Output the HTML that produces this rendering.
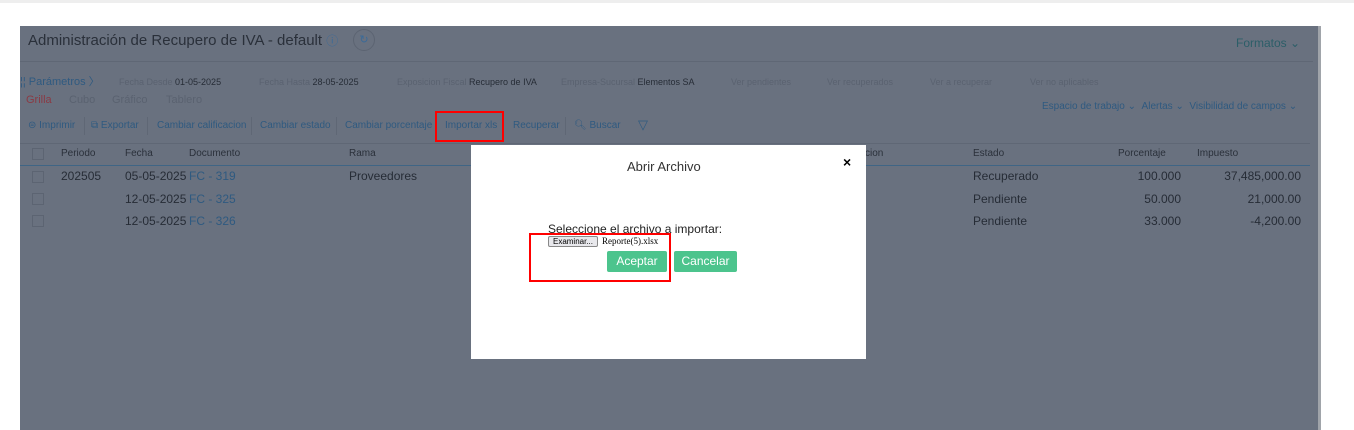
<!DOCTYPE html>
<html><head><meta charset="utf-8"><style>
*{margin:0;padding:0;box-sizing:border-box}
body{width:1354px;height:430px;background:#fff;position:relative;overflow:hidden;font-family:"Liberation Sans",sans-serif}
.bg{position:absolute;left:20px;top:26px;width:1300px;height:404px;background:#69717f}
.sb{position:absolute;left:1318px;top:26px;width:3px;height:404px;background:#a0a4aa}
.t{position:absolute;white-space:nowrap}
.s{font-size:9px;color:#5a6270}
.v{font-size:9px;color:#262c36}
.b{font-size:10px;color:#2f5a80}
.h{font-size:10px;color:#2a303a}
.r{font-size:12px;color:#262c36}
.ln{position:absolute;background:#5f6775}
.cb{position:absolute;width:12px;height:12px;border:1px solid #5c6472}
.red{position:absolute;border:2px solid #f00}
.sep{position:absolute;top:117px;width:1px;height:18px;background:#5f6775}
</style></head><body>
<div style="position:absolute;left:0;top:0;width:1354px;height:3px;background:#eee"></div>
<div class="bg"></div><div class="sb"></div>
<div class="t" style="left:28px;top:32px;font-size:15px;color:#2a303a">Administración de Recupero de IVA - default <span style="color:#3a6a98;font-size:12px">ⓘ</span></div>
<div style="position:absolute;left:353px;top:29px;width:22px;height:22px;border:1px solid #5c6472;border-radius:50%;color:#3a6a98;font-size:11px;text-align:center;line-height:20px">↻</div>
<div class="t" style="left:1236px;top:36px;font-size:12px;color:#2c5e68">Formatos ⌄</div>
<div class="ln" style="left:20px;top:61px;width:1293px;height:1px"></div>
<div class="t" style="left:20px;top:73px;font-size:11px;color:#2f5a80">¦¦ Parámetros 〉</div>
<div class="t s" style="left:119px;top:77px">Fecha Desde <span class="v">01-05-2025</span></div>
<div class="t s" style="left:259px;top:77px">Fecha Hasta <span class="v">28-05-2025</span></div>
<div class="t s" style="left:397px;top:77px">Exposicion Fiscal <span class="v">Recupero de IVA</span></div>
<div class="t s" style="left:561px;top:77px">Empresa-Sucursal <span class="v">Elementos SA</span></div>
<div class="t s" style="left:731px;top:77px">Ver pendientes</div>
<div class="t s" style="left:827px;top:77px">Ver recuperados</div>
<div class="t s" style="left:930px;top:77px">Ver a recuperar</div>
<div class="t s" style="left:1030px;top:77px">Ver no aplicables</div>
<div class="t" style="left:26px;top:94px;font-size:11px;color:#8a3a44">Grilla</div>
<div class="t" style="left:69px;top:94px;font-size:11px;color:#5a6270">Cubo</div>
<div class="t" style="left:112px;top:94px;font-size:11px;color:#5a6270">Gráfico</div>
<div class="t" style="left:166px;top:94px;font-size:11px;color:#5a6270">Tablero</div>
<div class="t b" style="left:1042px;top:101px">Espacio de trabajo ⌄ &nbsp;Alertas ⌄ &nbsp;Visibilidad de campos ⌄</div>
<div class="t b" style="left:28px;top:120px">⊜ Imprimir</div>
<div class="sep" style="left:84px"></div>
<div class="t b" style="left:91px;top:120px">⧉ Exportar</div>
<div class="sep" style="left:147px"></div>
<div class="t b" style="left:157px;top:120px">Cambiar calificacion</div>
<div class="sep" style="left:251px"></div>
<div class="t b" style="left:260px;top:120px">Cambiar estado</div>
<div class="sep" style="left:336px"></div>
<div class="t b" style="left:345px;top:120px">Cambiar porcentaje</div>
<div class="t b" style="left:445px;top:120px">Importar xls</div>
<div class="t b" style="left:513px;top:120px">Recuperar</div>
<div class="sep" style="left:565px"></div>
<div class="t b" style="left:574px;top:120px">🔍︎ Buscar</div>
<div class="t b" style="left:638px;top:117px;font-size:13px">▽</div>
<div class="red" style="left:435px;top:111px;width:69px;height:31px"></div>
<div class="ln" style="left:20px;top:143px;width:1290px;height:1px"></div>
<div class="ln" style="left:20px;top:165px;width:1290px;height:1px;background:#3f6585"></div>
<div class="cb" style="left:32px;top:148px"></div>
<div class="t h" style="left:61px;top:148px">Periodo</div>
<div class="t h" style="left:125px;top:148px">Fecha</div>
<div class="t h" style="left:189px;top:148px">Documento</div>
<div class="t h" style="left:349px;top:148px">Rama</div>
<div class="t h" style="left:865px;top:148px">cion</div>
<div class="t h" style="left:973px;top:148px">Estado</div>
<div class="t h" style="left:1118px;top:148px">Porcentaje</div>
<div class="t h" style="left:1197px;top:148px">Impuesto</div>
<div class="cb" style="left:32px;top:171px"></div><div class="cb" style="left:32px;top:193px"></div><div class="cb" style="left:32px;top:215px"></div>
<div class="t r" style="left:61px;top:169px">202505</div>
<div class="t r" style="left:125px;top:169px;width:62px;overflow:hidden">05-05-2025</div>
<div class="t r" style="left:125px;top:192px">12-05-2025</div>
<div class="t r" style="left:125px;top:214px">12-05-2025</div>
<div class="t r" style="left:189px;top:169px;color:#2f5a80">FC - 319</div>
<div class="t r" style="left:189px;top:192px;color:#2f5a80">FC - 325</div>
<div class="t r" style="left:189px;top:214px;color:#2f5a80">FC - 326</div>
<div class="t r" style="left:349px;top:169px">Proveedores</div>
<div class="t r" style="left:973px;top:169px">Recuperado</div>
<div class="t r" style="left:973px;top:192px">Pendiente</div>
<div class="t r" style="left:973px;top:214px">Pendiente</div>
<div class="t r" style="left:1100px;top:169px;width:81px;text-align:right">100.000</div>
<div class="t r" style="left:1100px;top:192px;width:81px;text-align:right">50.000</div>
<div class="t r" style="left:1100px;top:214px;width:81px;text-align:right">33.000</div>
<div class="t r" style="left:1190px;top:169px;width:111px;text-align:right">37,485,000.00</div>
<div class="t r" style="left:1190px;top:192px;width:111px;text-align:right">21,000.00</div>
<div class="t r" style="left:1190px;top:214px;width:111px;text-align:right">-4,200.00</div>
<div style="position:absolute;left:471px;top:145px;width:395px;height:214px;background:#fff"></div>
<div class="t" style="left:627px;top:159px;font-size:13px;color:#333">Abrir Archivo</div>
<div class="t" style="left:843px;top:154px;font-size:14px;font-weight:bold;color:#000">×</div>
<div class="t" style="left:548px;top:222px;font-size:12px;color:#222">Seleccione el archivo a importar:</div>
<div style="position:absolute;left:548px;top:236px;width:50px;height:11px;border:1px solid #888;border-radius:2px;background:#e8e8ec;font-size:8px;line-height:9px;text-align:center">Examinar...</div>
<div class="t" style="left:602px;top:236px;font-size:9px;font-family:'Liberation Serif',serif;color:#000">Reporte(5).xlsx</div>
<div style="position:absolute;left:607px;top:251px;width:60px;height:21px;background:#4cc48d;border-radius:2px;color:#fff;font-size:12px;text-align:center;line-height:21px">Aceptar</div>
<div style="position:absolute;left:674px;top:251px;width:63px;height:21px;background:#4cc48d;border-radius:2px;color:#fff;font-size:12px;text-align:center;line-height:21px">Cancelar</div>
<div class="red" style="left:529px;top:233px;width:142px;height:49px"></div>
</body></html>
